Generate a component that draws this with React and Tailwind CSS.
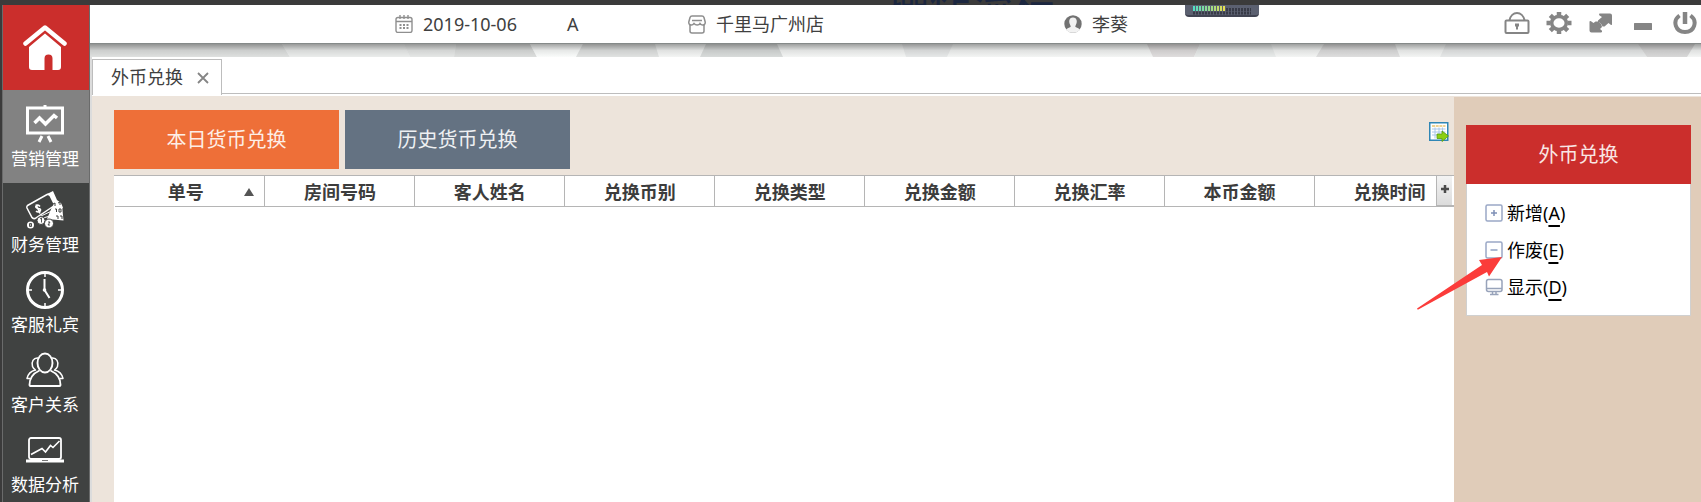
import React, { useState } from "react";

const columns = ["单号", "房间号码", "客人姓名", "兑换币别", "兑换类型", "兑换金额", "兑换汇率", "本币金额", "兑换时间"];

const HomeIcon = () => (
  <svg width="44" height="46" viewBox="0 0 44 46" fill="#fff">
    <path d="M2.500 18.500 22 2.500 41.500 18.500" fill="none" stroke="#fff" strokeWidth="4.500" strokeLinecap="round" strokeLinejoin="round" />
    <path d="M22 8.500 38 22v20a3 3 0 0 1-3 3h-5.500V33.500a4 4 0 0 0-8 0V45H9a3 3 0 0 1-3-3V22z" />
  </svg>
);

const BoardIcon = () => (
  <svg width="38" height="38" viewBox="0 0 38 38" fill="none" stroke="#fff">
    <path d="M19 0v3" strokeWidth="3" />
    <rect x="1.500" y="3" width="35" height="25" strokeWidth="3" />
    <path d="m8.500 18 5-5 6 6 8.500-8.500 3 2.500" strokeWidth="3.500" />
    <path d="m16 31-3 6M22 31l3 6" strokeWidth="3" />
  </svg>
);

const MoneyIcon = () => (
  <svg width="38" height="38" viewBox="0 0 38 38" fill="none" stroke="#fff">
    <path d="M28 11 36 14l1.500 15.500L21 28z" fill="#fff" stroke="none" />
    <path d="M21 3 27 0l4 9 4 3 2 5-8 3-5-10z" fill="#fff" stroke="none" />
    <path d="M1.500 14.500 21 3.500q2-.5 3 1l4 8q.5 2-1 3L9 27.500q-2 .5-3-1l-5-9.500q-.5-1.500.5-2.500z" strokeWidth="1.500" fill="#404241" />
    <path d="M14 15.500c-2-2.500-5-1-4 1s4 0 4.500 2-2.500 3.500-4.500 1.500M10 13.500l4 9" strokeWidth="1.600" />
    <path d="m15 25 15-7M17 27l14-4" strokeWidth="1" />
    <path d="m27 13 2-1v3m3-3 2-1 0 3M29 18h1.500v3m2.500-3h2v3h-2zM30 25h2v3m2-3h2v3" stroke="#404241" strokeWidth="1" />
    <circle cx="15" cy="29.500" r="4" fill="#fff" stroke="#404241" strokeWidth="1" />
    <circle cx="23" cy="32.500" r="4.500" fill="#fff" stroke="#404241" strokeWidth="1" />
    <circle cx="4.500" cy="34" r="3.500" fill="#fff" stroke="none" />
    <path d="m14 28 1.500-1v4.500M22 31h2l-2 3h2M3.500 32.500h2v3h-2zM3.500 34h2" stroke="#404241" strokeWidth=".9" />
  </svg>
);

const ClockIcon = () => (
  <svg width="38" height="38" viewBox="0 0 38 38" fill="none" stroke="#fff">
    <circle cx="19" cy="19" r="17.500" strokeWidth="3" />
    <path d="M19 3v3M19 32v3M3 19h3M32 19h3" strokeWidth="1.500" />
    <path d="M18.500 8v11l5 8" strokeWidth="2" />
    <circle cx="18.500" cy="19" r="1.800" fill="#fff" stroke="none" />
  </svg>
);

const PeopleIcon = () => (
  <svg width="38" height="38" viewBox="0 0 38 38" fill="none" stroke="#fff" strokeWidth="1.500" strokeLinejoin="round">
    <ellipse cx="19" cy="12" rx="7.500" ry="9.500" strokeWidth="1.900" />
    <path d="M13.500 19.500C8 22 3.500 27 3.500 34q0 1 1 1h29q1 0 1-1c0-7-4.500-12-10-14.500" strokeWidth="1.900" />
    <path d="M12 7C7.500 6.500 5 11 6.500 15.500c.5 1.500 1.500 2.500 3 3.500C5 20 2 23 1 27.500h3.500M26 7c4.500-.5 7 4 5.500 8.500-.5 1.500-1.500 2.500-3 3.500 4.500 1 7.500 4 8.500 8.500h-3.500" />
  </svg>
);

const LaptopIcon = () => (
  <svg width="38" height="38" viewBox="0 0 38 38" fill="none" stroke="#fff">
    <rect x="3" y="7" width="32" height="21" rx="2" strokeWidth="1.800" />
    <path d="m5 23.500 11-6 3.500 3.500 5-6.500 2.500 2 6.500-6.500" strokeWidth="1.600" />
    <path d="M0 30h38" strokeWidth="3" />
    <path d="M16 29.500h6" stroke="#777" strokeWidth="1" />
  </svg>
);

const CalendarIcon = () => (
  <svg width="18" height="18" viewBox="0 0 18 18" fill="none" stroke="#8f8f8f" strokeWidth="1.400">
    <rect x="1" y="2.500" width="16" height="15" rx="2" />
    <path d="M1 6.500h16M5 0v4M9 0v4M13 0v4" />
    <path d="M4.500 10h9M4.500 13h9" strokeWidth="2" strokeDasharray="2 1.500" />
  </svg>
);

const StoreIcon = () => (
  <svg width="18" height="19" viewBox="0 0 18 19" fill="none" stroke="#8f8f8f" strokeWidth="1.500">
    <path d="M4 1h10q1.500 0 2 1.500L17.200 7c.3 2-1.200 3.300-2.700 3-1.200 0-2-.8-2.500-1.500-1 2-4.500 2-6 0C5.500 9.200 4.700 10 3.500 10 2 10.300.5 9 .8 7L2 2.500Q2.500 1 4 1z" />
    <path d="M2 10v6q0 2 2 2h10q2 0 2-2v-6M4 5.500h10" />
  </svg>
);

const UserIcon = () => (
  <svg width="18" height="18" viewBox="0 0 18 18">
    <circle cx="9" cy="9" r="8.700" fill="#727272" />
    <path d="M2 14.500q1.500-1.500 4-2.200 1.200-.6.500-1.600Q5 8.500 5.200 6C5.500 3.500 7 2.500 9 2.500s3.500 1 3.800 3.500q.2 2.500-1.300 4.700-.7 1 .5 1.600 2.500.7 4 2.200Q13.500 17.700 9 17.700T2 14.500z" fill="#f2f2f2" />
  </svg>
);

const LockIcon = () => (
  <svg width="26" height="26" viewBox="0 0 26 26" fill="none" stroke="#858585" strokeWidth="2">
    <rect x="1.500" y="9.500" width="23" height="12.500" rx="1" />
    <path d="M5.500 9.500C7-.5 19-.5 20.500 9.500" />
    <path d="M11 12.500h4v3h-1v3h-2v-3h-1z" fill="#858585" stroke="none" />
  </svg>
);

const GearIcon = () => (
  <svg width="26" height="26" viewBox="0 0 26 26" fill="none" stroke="#858585">
    <ellipse cx="13" cy="12" rx="7.300" ry="6.500" strokeWidth="3.500" />
    <path
      d="M13 1v4M13 19v4M.5 12h4M21.500 12h4M4.300 4.300l2.800 2.700M21.700 4.300 18.900 7M4.300 19.700 7.100 17M21.700 19.700 18.900 17"
      strokeWidth="4.500"
    />
  </svg>
);

const ExpandIcon = () => (
  <svg width="26" height="26" viewBox="0 0 26 26" fill="#858585">
    <path d="M11.500 2.500H22q2 0 2 2v8.700q0 1.300-1.300.5L20.500 12l-4 3.500h-2q-1.500-4-4.500-4.500v-1.500L14 6l-2.500-1.500q-1-1.500 0-2z" />
    <path d="M1.500 11q0-1.500 1.500-.8L5.500 12l2-1.500h2.500q3.500 1.500 4 5.500l-2 2 2 1.800q.5 1.700-1 1.700H3.500q-2 0-2-2z" />
  </svg>
);

const MinimizeIcon = () => (
  <svg width="26" height="26" viewBox="0 0 26 26">
    <rect x="4" y="12" width="18" height="7" rx=".5" fill="#858585" />
  </svg>
);

const PowerIcon = () => (
  <svg width="26" height="26" viewBox="0 0 26 26" fill="none" stroke="#858585" strokeWidth="4">
    <path d="M7.500 4.500C0 10 3.500 21 13 21S26 10 18.500 4.500" />
    <path d="M13 1v12" strokeWidth="4.500" />
  </svg>
);

const ExportIcon = () => (
  <svg width="20" height="20" viewBox="0 0 20 20">
    <rect x=".75" y=".75" width="18" height="17.500" fill="#fff" stroke="#2f86b5" strokeWidth="1.500" />
    <path d="M3 4h13.500" stroke="#e9c46e" strokeWidth="1.500" strokeDasharray="3 .7" />
    <path d="M3 7h13.500M3 10h13.500M3 13h13.500M6 5.500v11M10 5.500v11M13.500 5.500v11" stroke="#a8c6e8" />
    <path d="M8 12h5V9l6.500 5-6.500 5.500v-3H8z" fill="#8ccf12" stroke="#559c12" strokeWidth=".8" />
  </svg>
);

const PlusBoxIcon = () => (
  <svg width="18" height="18" viewBox="0 0 18 18" fill="none" stroke="#9aa8c6" strokeWidth="1.500">
    <rect x="1" y="1" width="16" height="16" rx="1.500" />
    <path d="M6 9h6M9 6v6" stroke="#7f90b6" />
  </svg>
);

const MinusBoxIcon = () => (
  <svg width="18" height="18" viewBox="0 0 18 18" fill="none" stroke="#9aa8c6" strokeWidth="1.500">
    <rect x="1" y="1" width="16" height="16" rx="1.500" />
    <path d="M5.500 9h7" stroke="#8fa0c3" />
  </svg>
);

const ScreenIcon = () => (
  <svg width="18" height="18" viewBox="0 0 18 18" fill="none" stroke="#98a3ba" strokeWidth="1.500">
    <rect x="1.500" y="1.500" width="15.500" height="12" rx="2" />
    <path d="M2 10.500h15M5 16.500h8.500M7.500 13.500v3M11 13.500v3" />
  </svg>
);

const modules = [
  { label: "营销管理", icon: BoardIcon },
  { label: "财务管理", icon: MoneyIcon },
  { label: "客服礼宾", icon: ClockIcon },
  { label: "客户关系", icon: PeopleIcon },
  { label: "数据分析", icon: LaptopIcon },
];

const windowButtons = [
  { title: "锁定", icon: LockIcon },
  { title: "设置", icon: GearIcon },
  { title: "全屏", icon: ExpandIcon },
  { title: "最小化", icon: MinimizeIcon },
  { title: "退出", icon: PowerIcon },
];

const actions = [
  { label: "新增", hotkey: "A", icon: PlusBoxIcon },
  { label: "作废", hotkey: "E", icon: MinusBoxIcon },
  { label: "显示", hotkey: "D", icon: ScreenIcon },
];

const Sidebar = ({ active, onSelect }) => (
  <nav className="w-[88px] shrink-0 border-x border-[#6a6b6b] bg-[#404241] overflow-hidden">
    <button aria-label="首页" className="flex h-[85px] w-full items-center justify-center bg-[#cb2e2c] pr-[2px]">
      <HomeIcon />
    </button>
    {modules.map(({ label, icon: Icon }) => (
      <button
        key={label}
        onClick={() => onSelect(label)}
        className={`flex w-full flex-col items-center gap-1 pr-[2px] text-[17px] leading-6 text-white ${
          active === label ? "bg-[#828282] pt-[15px] pb-3" : "pt-2 pb-[6px]"
        }`}
      >
        <Icon />
        {label}
      </button>
    ))}
  </nav>
);

const Header = () => (
  <header className="grid h-[39px] grid-cols-[305fr_293fr_376fr_637fr] items-center border-b border-[#858a89] bg-white text-[18px] text-[#404040]">
    <div />
    <div className="flex items-center gap-[10px]">
      <CalendarIcon />
      <span>2019-10-06</span>
      <span className="ml-10">A</span>
    </div>
    <div className="flex items-center gap-[10px]">
      <StoreIcon />
      <span>千里马广州店</span>
    </div>
    <div className="flex items-center gap-[10px]">
      <UserIcon />
      <span>李葵</span>
      <div className="ml-auto flex gap-4 pr-[3px]">
        {windowButtons.map(({ title, icon: Icon }) => (
          <button key={title} aria-label={title}>
            <Icon />
          </button>
        ))}
      </div>
    </div>
  </header>
);

// faceted strip below the header, with the header's shadow on top
const Facets = () => (
  <div className="relative h-[13px] bg-[#f3f5f4]">
    <svg className="block h-full w-full" viewBox="90 0 1611 13" preserveAspectRatio="none">
      <path d="M90 0h192l8 13H90z" fill="#dee0df" />
      <path d="M282 0h122l6 13H290z" fill="#eaeceb" />
      <path d="M404 0h52l-2 13h-44z" fill="#e5e7e6" />
      <path d="M456 0h74l7 13h-83z" fill="#dcdedd" />
      <path d="M530 0h53l-7 13h-39z" fill="#fafcfb" />
      <path d="M583 0h72l4 13h-83z" fill="#e0e2e1" />
      <path d="M706 0h71l6 13h-83z" fill="#d8dbda" />
      <path d="M902 0h51l-6 13h-41z" fill="#e6e8e8" />
      <path d="M1147 0h53l-6 13h-41z" fill="#dfdddd" />
      <path d="M1200 0h71l5 13h-82z" fill="#e8ebea" />
      <path d="M1324 0h71l5 13h-84z" fill="#dedede" />
      <path d="M1446 0h192l9 13h-207z" fill="#e6e8e8" />
      <path d="M1638 0h57l-8 13h-40z" fill="#d8d8d8" />
    </svg>
    <div className="absolute inset-0 bg-linear-to-b from-black/35 via-black/8 to-transparent" />
  </div>
);

const TabBar = () => (
  <div className="flex h-[39px] bg-white pt-[2px] pb-px">
    <div className="flex w-[130px] items-center gap-[14px] border-x border-t border-[#bdbdbd] pl-[18px] text-[18px] text-[#404040]">
      外币兑换
      <button aria-label="关闭">
        <svg width="12" height="12" viewBox="0 0 12 12" stroke="#858585" strokeWidth="1.800">
          <path d="m1 1 10 10M11 1 1 11" />
        </svg>
      </button>
    </div>
    <div className="mb-px flex-1 border-b border-[#bdbdbd]" />
  </div>
);

const ExchangeTable = () => (
  <div className="relative flex-1 overflow-hidden border-t border-[#b5b5b5] bg-white">
    <table className="ml-px w-[1350px] table-fixed border-collapse">
      <thead>
        <tr className="h-[30px] border-b border-[#b5b5b5]">
          {columns.map((name, i) => (
            <th key={name} className="relative border-r border-[#b5b5b5] p-0 pt-[2px] text-[18px] leading-6 font-bold text-[#3c3c3c]">
              <span className={i === 0 ? "pr-2" : ""}>{name}</span>
              {i === 0 && (
                <svg className="absolute top-3 right-[10px]" width="10" height="8" viewBox="0 0 10 8">
                  <path d="M5 0l5 8H0z" fill="#555" />
                </svg>
              )}
            </th>
          ))}
        </tr>
      </thead>
      <tbody />
    </table>
    <div className="absolute top-0 right-0 h-[30px] w-[18px] border-b border-l border-[#b5b5b5] bg-white pr-[2px]">
      <button aria-label="选择列" className="flex h-full w-full items-center justify-center bg-linear-to-b from-[#f3f3f3] to-[#dcdcdc] pb-[3px]">
        <svg width="8" height="8" viewBox="0 0 8 8" stroke="#4a4a4a" strokeWidth="2.500">
          <path d="M0 4h8M4 0v8" />
        </svg>
      </button>
    </div>
  </div>
);

const ActionPanel = () => (
  <aside className="mt-px w-[247px] shrink-0 bg-[#e0ccb9] pt-7 pr-[10px] pl-3">
    <section className="relative border border-[#d0d0d0] bg-white">
      <h2 className="-mx-px -mt-px flex h-[59px] items-center justify-center bg-[#cb2e2c] text-[20px] text-[#f9e6e4]">
        外币兑换
      </h2>
      <ul className="py-[10px]">
        {actions.map(({ label, hotkey, icon: Icon }) => (
          <li key={label}>
            <button className="flex h-[37px] items-center gap-1 pl-[18px] text-[18px] leading-6 text-black">
              <Icon />
              <span>
                {label}(<u className="decoration-2 underline-offset-[5px]">{hotkey}</u>)
              </span>
            </button>
          </li>
        ))}
      </ul>
      <svg className="absolute top-[129px] -left-[52px]" width="90" height="56" viewBox="0 0 90 56">
        <path d="M87 2 64 5l3 5L2 53.500l.8 1.300L72 17l2 4.500z" fill="#fb3c3a" />
      </svg>
    </section>
  </aside>
);

export default function App() {
  const [module, setModule] = useState("营销管理");
  const [view, setView] = useState("today");

  return (
    <div className="flex h-screen flex-col overflow-hidden bg-[#3b3b3b] font-['Noto_Sans','Noto_Sans_CJK_SC',sans-serif]">
      <div className="relative h-[5px] shrink-0 overflow-hidden">
        <div className="absolute -top-[18px] left-[887px] text-[42px] leading-none whitespace-nowrap text-[#1c2740]">
          操作流程
        </div>
      </div>

      <div className="relative flex min-h-0 flex-1 pl-[2px]">
        <Sidebar active={module} onSelect={setModule} />

        <div className="flex min-w-0 flex-1 flex-col">
          <Header />
          <Facets />
          <div className="flex min-h-0 flex-1 flex-col border-l-2 border-[#dcdcdc]">
            <TabBar />
            <div className="flex min-h-0 flex-1 bg-[#ede4db]">
              <main className="flex min-w-0 flex-1 flex-col pt-[14px] pl-[22px]">
                <div className="mb-[6px] flex items-start gap-[6px] text-[20px]">
                  <button
                    onClick={() => setView("today")}
                    className="h-[59px] w-[225px] bg-[#ee6f38] text-[#fdeee6]"
                  >
                    本日货币兑换
                  </button>
                  <button
                    onClick={() => setView("history")}
                    className="h-[59px] w-[225px] bg-[#647282] text-[#eef0f2]"
                  >
                    历史货币兑换
                  </button>
                  <button aria-label="导出" className="mt-3 mr-[5px] ml-auto">
                    <ExportIcon />
                  </button>
                </div>
                <ExchangeTable key={view} />
              </main>
              <ActionPanel />
            </div>
          </div>
        </div>

        {/* level meter hanging from the top edge */}
        <div className="absolute top-0 right-[442px] h-3 w-[74px] rounded-b border-b-2 border-[#414452] bg-[#5b6070]">
          <svg className="block" width="74" height="10" viewBox="0 0 74 10">
            <defs>
              <linearGradient id="level" gradientUnits="userSpaceOnUse" x1="8" y1="0" x2="41" y2="0">
                <stop offset="0" stopColor="#4fe0c8" />
                <stop offset=".6" stopColor="#a5dc80" />
                <stop offset="1" stopColor="#f0e04a" />
              </linearGradient>
            </defs>
            <path d="M8 8h58M41 4.500h25" stroke="#383b47" strokeWidth="3" strokeDasharray="2 1" />
            <path d="M8 3.500h33v.01" fill="none" stroke="url(#level)" strokeWidth="5" strokeDasharray="2 1" />
          </svg>
        </div>
      </div>
    </div>
  );
}
